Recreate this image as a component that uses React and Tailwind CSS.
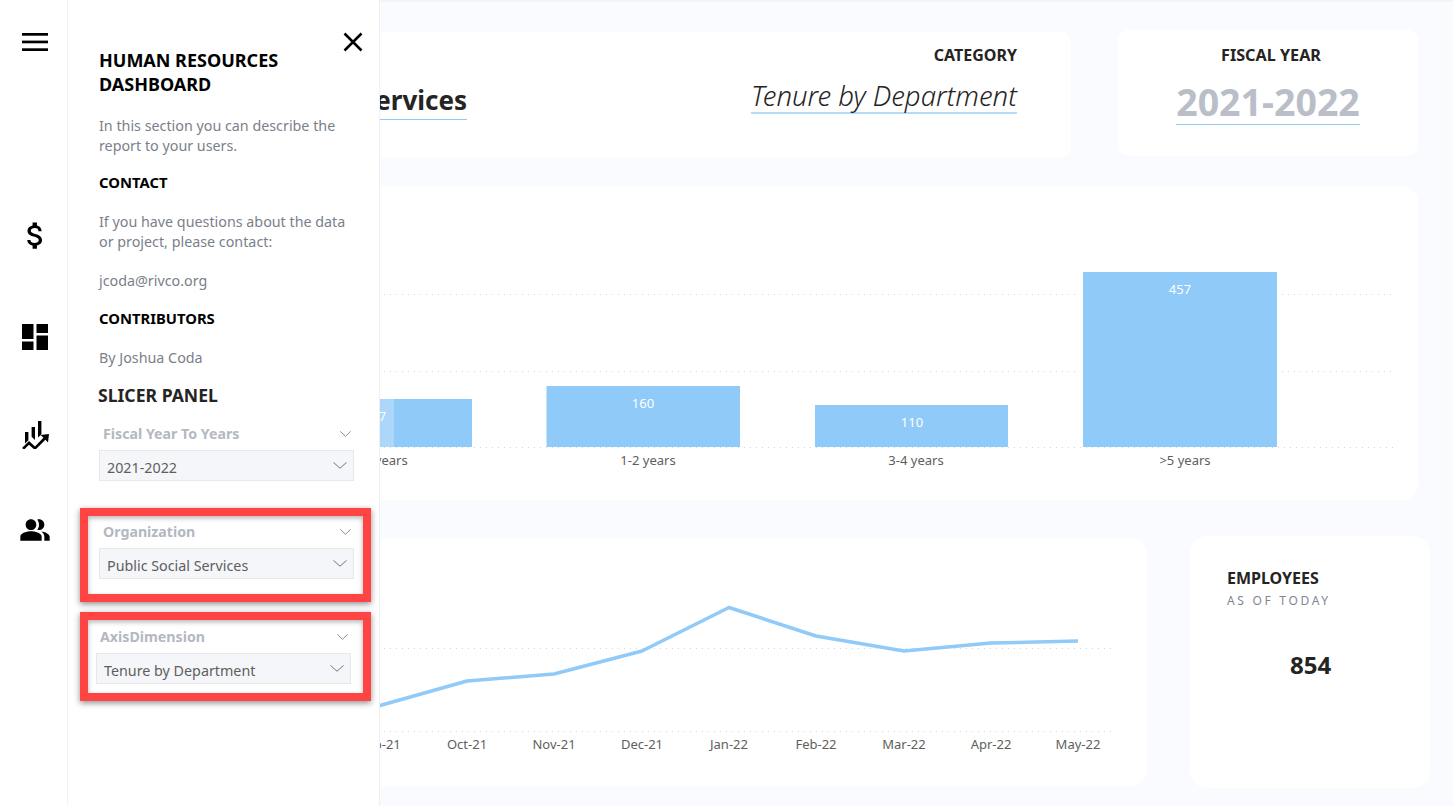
import React from "react";

function Chevron({ className = "" }) {
  return (
    <svg viewBox="0 0 16 9" fill="none" stroke="currentColor" strokeWidth="1.1" preserveAspectRatio="none" className={className}>
      <path d="M0.5 0.5 L8 8 L15.5 0.5" />
    </svg>
  );
}

function Slicer({ label, value }) {
  return (
    <div>
      <div className="flex items-center justify-between h-[20px]">
        <span className="text-[14.2px] font-bold text-[#b3b8c2] pl-[4px] leading-[20px]">{label}</span>
        <Chevron className="w-[11px] h-[6px] text-[#5f6570] mr-[3px]" />
      </div>
      <div className="mt-[6px] h-[31px] bg-[#f5f6fa] border border-[#e6e8ec] flex items-center justify-between pl-[7px] pr-[6px]">
        <span className="text-[14.3px] text-[#605e5c] pt-[4px]">{value}</span>
        <Chevron className="w-[14px] h-[7px] text-[#5f6570]" />
      </div>
    </div>
  );
}

function RailIcon({ children, className = "" }) {
  return <div className={`flex justify-center ${className}`}>{children}</div>;
}

function BarChart() {
  const bars = [
    { x: 279, y: 399, w: 193, v: "127", label: "0-1 years", cx: 375, lx: 380 },
    { x: 546.5, y: 386, w: 193.5, v: "160", label: "1-2 years", cx: 643, lx: 648 },
    { x: 815, y: 405, w: 193, v: "110", label: "3-4 years", cx: 912, lx: 916 },
    { x: 1083, y: 272, w: 194, v: "457", label: ">5 years", cx: 1180, lx: 1185 },
  ];
  const grid = "#d4d6da";
  return (
    <svg viewBox="88 186 1330 314" className="w-full h-full block">
      <path d="M120 294.5H1078M1282 294.5H1394M120 371.5H1078M1282 371.5H1394M120 447.5H1394" stroke={grid} strokeWidth="1" strokeDasharray="1 5" />
      {bars.map((b) => (
        <g key={b.label}>
          <rect x={b.x} y={b.y} width={b.w} height={447 - b.y} fill="#90caf9" />
          <text x={b.cx} y={b.y + 22} textAnchor="middle" fontSize="13" fill="#ffffff" fontFamily="'Noto Sans', sans-serif">{b.v}</text>
          <text x={b.lx} y={465} textAnchor="middle" fontSize="13" fill="#605e5c" fontFamily="'Noto Sans', sans-serif">{b.label}</text>
        </g>
      ))}
      <rect x="380" y="399" width="14" height="48" fill="#ffffff" opacity="0.25" />
    </svg>
  );
}

function LineChart() {
  const pts = "293,764 380,705.5 467,681 554,674 642,651 729,607.5 816,636 904,651 991,643 1078,641";
  const labels = [
    ["Sep-21", 380], ["Oct-21", 467], ["Nov-21", 554], ["Dec-21", 642], ["Jan-22", 729],
    ["Feb-22", 816], ["Mar-22", 904], ["Apr-22", 991], ["May-22", 1078],
  ];
  return (
    <svg viewBox="88 538 1059 248" className="w-full h-full block">
      <path d="M120 648.5H1112M120 731.5H1112" stroke="#d4d6da" strokeWidth="1" strokeDasharray="1 5" />
      <polyline points={pts} fill="none" stroke="#90caf9" strokeWidth="3.5" strokeLinejoin="round" />
      {labels.map(([t, x]) => (
        <text key={t} x={x} y={749} textAnchor="middle" fontSize="13" fill="#605e5c" fontFamily="'Noto Sans', sans-serif">{t}</text>
      ))}
    </svg>
  );
}

export default function App() {
  return (
    <div className="relative flex w-[1453px] h-[806px] overflow-hidden bg-white font-['Noto_Sans',sans-serif]">
      {/* rail */}
      <aside className="w-[68px] shrink-0 bg-white border-r border-[#f3f3f3] flex flex-col text-black pl-[3px]">
        <RailIcon className="mt-[33px]">
          <svg viewBox="0 0 26 18" className="w-[26px] h-[18px]" fill="#000">
            <rect y="0" width="26" height="2.7" />
            <rect y="7.6" width="26" height="2.7" />
            <rect y="15.3" width="26" height="2.7" />
          </svg>
        </RailIcon>
        <RailIcon className="mt-[167px]">
          <svg viewBox="0 0 24 24" className="w-[35px] h-[35px]" fill="#000">
            <path d="M11.8 10.9c-2.27-.59-3-1.2-3-2.15 0-1.09 1.01-1.85 2.7-1.85 1.78 0 2.44.85 2.5 2.1h2.21c-.07-1.72-1.12-3.3-3.21-3.81V3h-3v2.16c-1.94.42-3.5 1.68-3.5 3.61 0 2.31 1.91 3.46 4.7 4.13 2.5.6 3 1.48 3 2.41 0 .69-.49 1.79-2.7 1.79-2.06 0-2.87-.92-2.98-2.1h-2.2c.12 2.19 1.76 3.42 3.68 3.83V21h3v-2.15c1.95-.37 3.5-1.5 3.5-3.55 0-2.84-2.43-3.81-4.7-4.4z" />
          </svg>
        </RailIcon>
        <RailIcon className="mt-[71px]">
          <svg viewBox="0 0 26 26" className="w-[26px] h-[26px]" fill="#000">
            <rect x="0" y="0" width="11.5" height="15" />
            <rect x="14.5" y="0" width="11.5" height="9" />
            <rect x="0" y="17.5" width="11.5" height="8.5" />
            <rect x="14.5" y="11.5" width="11.5" height="14.5" />
          </svg>
        </RailIcon>
        <RailIcon className="mt-[71px]">
          <svg viewBox="0 0 28 28" className="w-[28px] h-[28px]" fill="#000">
            <path d="M17 0h3.4v13.2l-3.4 3.4zM10.6 6h3.4v13l-3.4-3.2zM4 11h3.4v8.2L4 22.6zM1 27l7-7 6 5.4 8.4-8.6v0L19.6 14 28 13l-1 8.6-2.6-2.9-10.4 10.4-6-5.4-4.8 4.8z" />
          </svg>
        </RailIcon>
        <RailIcon className="mt-[65px]">
          <svg viewBox="0 0 24 24" className="w-[32px] h-[32px]" fill="#000">
            <path d="M16.67 13.13C18.04 14.06 19 15.32 19 17v3h4v-3c0-2.18-3.57-3.47-6.33-3.87zM15 12c2.21 0 4-1.79 4-4s-1.79-4-4-4c-.47 0-.91.1-1.33.24C14.5 5.27 15 6.58 15 8s-.5 2.73-1.33 3.76c.42.14.86.24 1.33.24zM9 12c2.21 0 4-1.79 4-4s-1.79-4-4-4-4 1.79-4 4 1.79 4 4 4zM9 13c-2.67 0-8 1.34-8 4v3h16v-3c0-2.66-5.33-4-8-4z" />
          </svg>
        </RailIcon>
      </aside>

      {/* report */}
      <main className="flex-1 bg-[#fafbfe] pl-[20px] pt-[30px] text-[#252423] border-t-2 border-[#f4f4f5]">
        <div className="flex items-start">
          <section className="w-[983px] h-[126px] bg-white rounded-[10px] flex justify-between pr-[54px]">
            <div className="mt-[50px] pl-[30px]">
              <div className="text-[26px] font-bold leading-[37px] border-b border-[#90caf9] whitespace-nowrap pl-[76px]">
                Public Social Services
              </div>
            </div>
            <div className="flex flex-col items-end pt-[12px]">
              <div className="text-[16px] font-bold leading-[22px]">CATEGORY</div>
              <div className="mt-[13px] text-[27.5px] font-light italic leading-[33px] border-b-2 border-[#b3dcfb] text-[#252423]">Tenure by Department</div>
            </div>
          </section>
          <section className="ml-[47px] w-[300px] h-[126px] -mt-[2px] bg-white rounded-[10px] flex flex-col items-center pt-[14px]">
            <div className="text-[16.2px] font-bold leading-[22px] pl-[6px]">FISCAL YEAR</div>
            <div className="mt-[14px] text-[37.5px] font-bold leading-[44px] text-[#b9bec8] border-b border-[#90caf9]">2021-2022</div>
          </section>
        </div>

        <section className="mt-[28px] w-[1330px] h-[314px] bg-white rounded-[16px] overflow-hidden">
          <BarChart />
        </section>

        <div className="mt-[36px] flex items-start">
          <section className="mt-[2px] w-[1059px] h-[248px] bg-white rounded-[16px] overflow-hidden">
            <LineChart />
          </section>
          <section className="ml-[43px] w-[240px] h-[252px] bg-white rounded-[18px] pl-[37px] pt-[31px]">
            <div className="text-[16px] font-bold leading-[22px] text-[#252423]">EMPLOYEES</div>
            <div className="mt-[4px] text-[12px] tracking-[2.7px] leading-[16px] text-[#7f8694]">AS OF TODAY</div>
            <div className="mt-[40px] pl-[63px] text-[24px] font-bold leading-[32px] text-[#252423]">854</div>
          </section>
        </div>
      </main>

      {/* slide-out panel, over the report */}
      <aside className="absolute left-[68px] top-0 w-[312px] h-[806px] bg-white border-r border-[#f0f0f0] pt-[48px]">
        <button className="absolute right-[16px] top-[32px] text-black">
          <svg viewBox="0 0 20 20" className="w-[20px] h-[20px]" fill="none" stroke="#000" strokeWidth="2.5">
            <path d="M1.5 1.5 L18.5 18.5 M18.5 1.5 L1.5 18.5" />
          </svg>
        </button>
        <div className="pl-[31px] pr-[20px]">
          <h1 className="text-[18px] font-bold leading-[24px] text-black">HUMAN RESOURCES<br />DASHBOARD</h1>
          <p className="mt-[20px] text-[14.3px] leading-[20px] text-[#7a7f8a]">In this section you can describe the<br />report to your users.</p>
          <h2 className="mt-[16px] text-[14.8px] font-bold leading-[20px] text-black">CONTACT</h2>
          <p className="mt-[20px] text-[14.3px] leading-[20px] text-[#7a7f8a]">If you have questions about the data<br />or project, please contact:</p>
          <p className="mt-[19px] text-[14.3px] leading-[20px] text-[#7a7f8a]">jcoda@rivco.org</p>
          <h2 className="mt-[17px] text-[14.8px] font-bold leading-[20px] text-black">CONTRIBUTORS</h2>
          <p className="mt-[20px] text-[14.3px] leading-[20px] text-[#7a7f8a]">By Joshua Coda</p>
          <h2 className="mt-[15px] -ml-[1px] text-[17.6px] font-bold leading-[24px] text-[#252423]">SLICER PANEL</h2>
        </div>
        <div className="mt-[17px] pl-[31px] pr-[25px]">
          <Slicer label="Fiscal Year To Years" value="2021-2022" />
        </div>
        <div className="mt-[27px] ml-[12px] w-[291px] h-[94px] border-[8px] border-[#ff4444] shadow-[0_2px_6px_rgba(0,0,0,0.45),inset_0_2px_5px_rgba(0,0,0,0.3)] pl-[11px] pr-[9px] pt-[6px]">
          <Slicer label="Organization" value="Public Social Services" />
        </div>
        <div className="mt-[10px] ml-[12px] w-[291px] h-[89px] border-[8px] border-[#ff4444] shadow-[0_2px_6px_rgba(0,0,0,0.45),inset_0_2px_5px_rgba(0,0,0,0.3)] pl-[8px] pr-[12px] pt-[7px]">
          <Slicer label="AxisDimension" value="Tenure by Department" />
        </div>
      </aside>
    </div>
  );
}
